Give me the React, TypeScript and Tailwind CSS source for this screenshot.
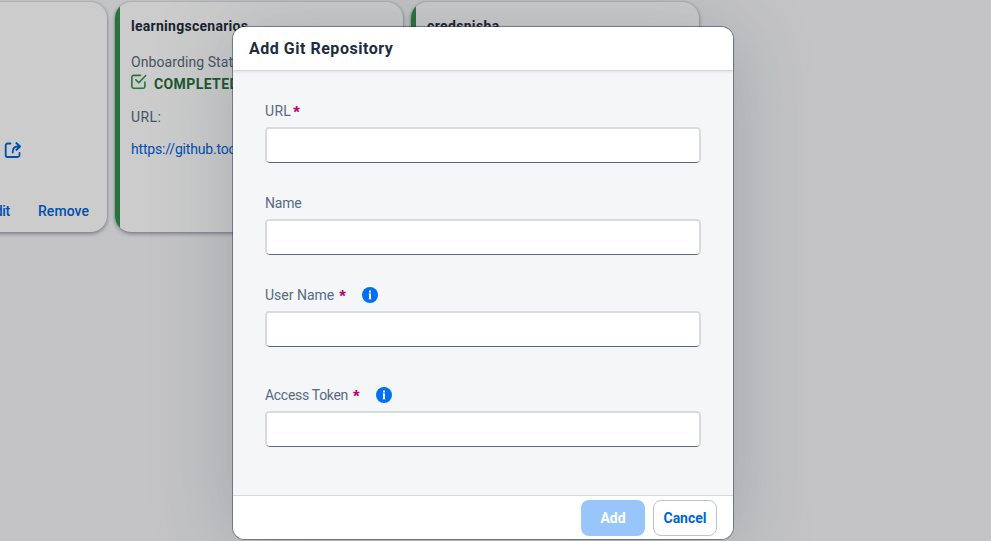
import type { ReactNode } from "react";

function Card({ accent, title, titleClass = "", children }: { accent?: boolean; title?: string; titleClass?: string; children?: ReactNode }) {
  return (
    <section className="relative h-[230px] w-72 shrink-0 overflow-hidden rounded-2xl bg-white shadow-[0_0_2px_rgba(34,53,72,0.3),0_2px_4px_rgba(34,53,72,0.4)]">
      {accent && <div className="absolute inset-y-0 left-0 w-[5px] bg-[#30914c]" />}
      <div className="flex h-full flex-col whitespace-nowrap pl-4">
        {title && <h2 className={`mt-[14px] text-sm leading-5 font-bold text-[#1d2d3e] ${titleClass}`}>{title}</h2>}
        {children}
      </div>
    </section>
  );
}

function InfoIcon() {
  return (
    <svg viewBox="0 0 16 16" className="size-4" aria-hidden="true">
      <circle cx="8" cy="8" r="8" fill="#0070f2" />
      <path d="M8 3.5v1.9M8 6.5V12" fill="none" stroke="#fff" strokeWidth="2" />
      <path d="M6.7 7H8M6.7 11.9h2.6" fill="none" stroke="#fff" strokeWidth="0.8" />
    </svg>
  );
}

function Field({ label, required, info, className = "", labelClass = "" }: { label: string; required?: boolean; info?: boolean; className?: string; labelClass?: string }) {
  return (
    <div className={className}>
      <div className="flex h-6 items-center text-sm text-[#556b82]">
        <span className={labelClass}>{label}</span>
        {required && (
          <span className={`w-[7px] pt-[3px] font-['Liberation_Sans',sans-serif] text-[17px] leading-5 font-bold text-[#ba066c] ${info ? "ml-[5px]" : "ml-[2px]"}`}>*</span>
        )}
        {info && <span className="ml-4"><InfoIcon /></span>}
      </div>
      <div className="mt-1 h-9 overflow-hidden rounded-[4px] bg-white shadow-[inset_0_0_0_2px_#d9dbde]">
        <input aria-label={label} className="mx-0.5 mt-0.5 block h-[34px] w-[432px] rounded-[3px] border-b border-[#556b82] bg-white px-2 text-sm outline-none" />
      </div>
    </div>
  );
}

export default function App() {
  return (
    <main className="relative h-[541px] w-[991px] overflow-hidden bg-[#f5f6f8] font-[Roboto,sans-serif]">
      <div className="-ml-[181px] flex gap-2 pt-[2px]">
        <Card>
          <div className="mt-[139px] ml-[169px]">
            <svg viewBox="0 0 18 18" className="size-[18px]" fill="none" stroke="#0064d9" strokeWidth="1.8" strokeLinecap="round" strokeLinejoin="round">
              <path d="M6.5 2.5h-3A1.8 1.8 0 0 0 1.7 4.3v9.9A1.8 1.8 0 0 0 3.5 16h10.2a1.8 1.8 0 0 0 1.8-1.8V12M12.3 2l3.8 3.5-3.8 3.5M16 5.5h-2.5C10.2 5.5 8.7 7.5 8.7 11.5" />
            </svg>
          </div>
          <div className="mt-[42px] mr-[18px] flex justify-end gap-7 text-sm leading-5 font-medium tracking-[0.05px] text-[#0064d9]">
            <span className="tracking-[-0.3px]">Edit</span><span>Remove</span>
          </div>
        </Card>
        <Card accent title="learningscenarios" titleClass="tracking-[0.27px]">
          <p className="mt-4 text-sm leading-5 tracking-[0.08px] text-[#556b82]">Onboarding Status:</p>
          <div className="mt-px flex h-[22px] items-center gap-[7px] text-sm font-bold tracking-[0.4px] text-[#256f3a]">
            <svg viewBox="0 0 16 16" className="-mt-1 size-4" fill="none" stroke="#30914c" strokeWidth="1.6" strokeLinecap="round" strokeLinejoin="round">
              <path d="M9.5 1.4H2.5A1.7 1.7 0 0 0 .9 3v9.5a1.7 1.7 0 0 0 1.6 1.7h9.8a1.7 1.7 0 0 0 1.6-1.7V8M4.8 5.8l3 3L14.7 1.5" />
            </svg>
            COMPLETED
          </div>
          <p className="mt-3 text-sm leading-5 tracking-[0.4px] text-[#556b82]">URL:</p>
          <p className="mt-3 text-sm leading-5 tracking-[-0.18px] text-[#0064d9]">https://github.tools.sap</p>
        </Card>
        <Card accent title="credsnisha" titleClass="tracking-[0.35px]" />
      </div>

      <div className="absolute inset-0 bg-black/20" />

      <div role="dialog" className="absolute top-[27px] left-[233px] flex h-[512px] w-[500px] flex-col rounded-xl bg-white shadow-[0_0_0_1px_rgba(34,53,72,0.48),0_8px_80px_rgba(50,67,85,0.25)]">
        <header className="z-10 flex h-11 items-center rounded-t-xl border-b border-[#d5d7d9] bg-white px-4 shadow-[0_1px_3px_rgba(34,53,72,0.1)]">
          <h1 className="text-base font-bold tracking-[0.52px] text-[#1d2d3e]">Add Git Repository</h1>
        </header>
        <div className="flex-1 bg-[#f5f6f8] px-8 pt-7">
          <Field label="URL" required labelClass="tracking-[0.3px]" />
          <Field label="Name" className="mt-7" labelClass="tracking-[-0.2px]" />
          <Field label="User Name" required info className="mt-7" />
          <Field label="Access Token" required info className="mt-9" labelClass="tracking-[-0.3px]" />
        </div>
        <footer className="flex h-11 items-center justify-end gap-2 rounded-b-xl border-t border-[#d5d7d9] bg-white px-4 text-sm font-bold">
          <button className="h-9 w-16 rounded-lg bg-[#99c6fa] text-white">Add</button>
          <button className="h-9 w-16 rounded-lg border border-[#bcc3ca] text-[#0064d9]">Cancel</button>
        </footer>
      </div>
    </main>
  );
}
